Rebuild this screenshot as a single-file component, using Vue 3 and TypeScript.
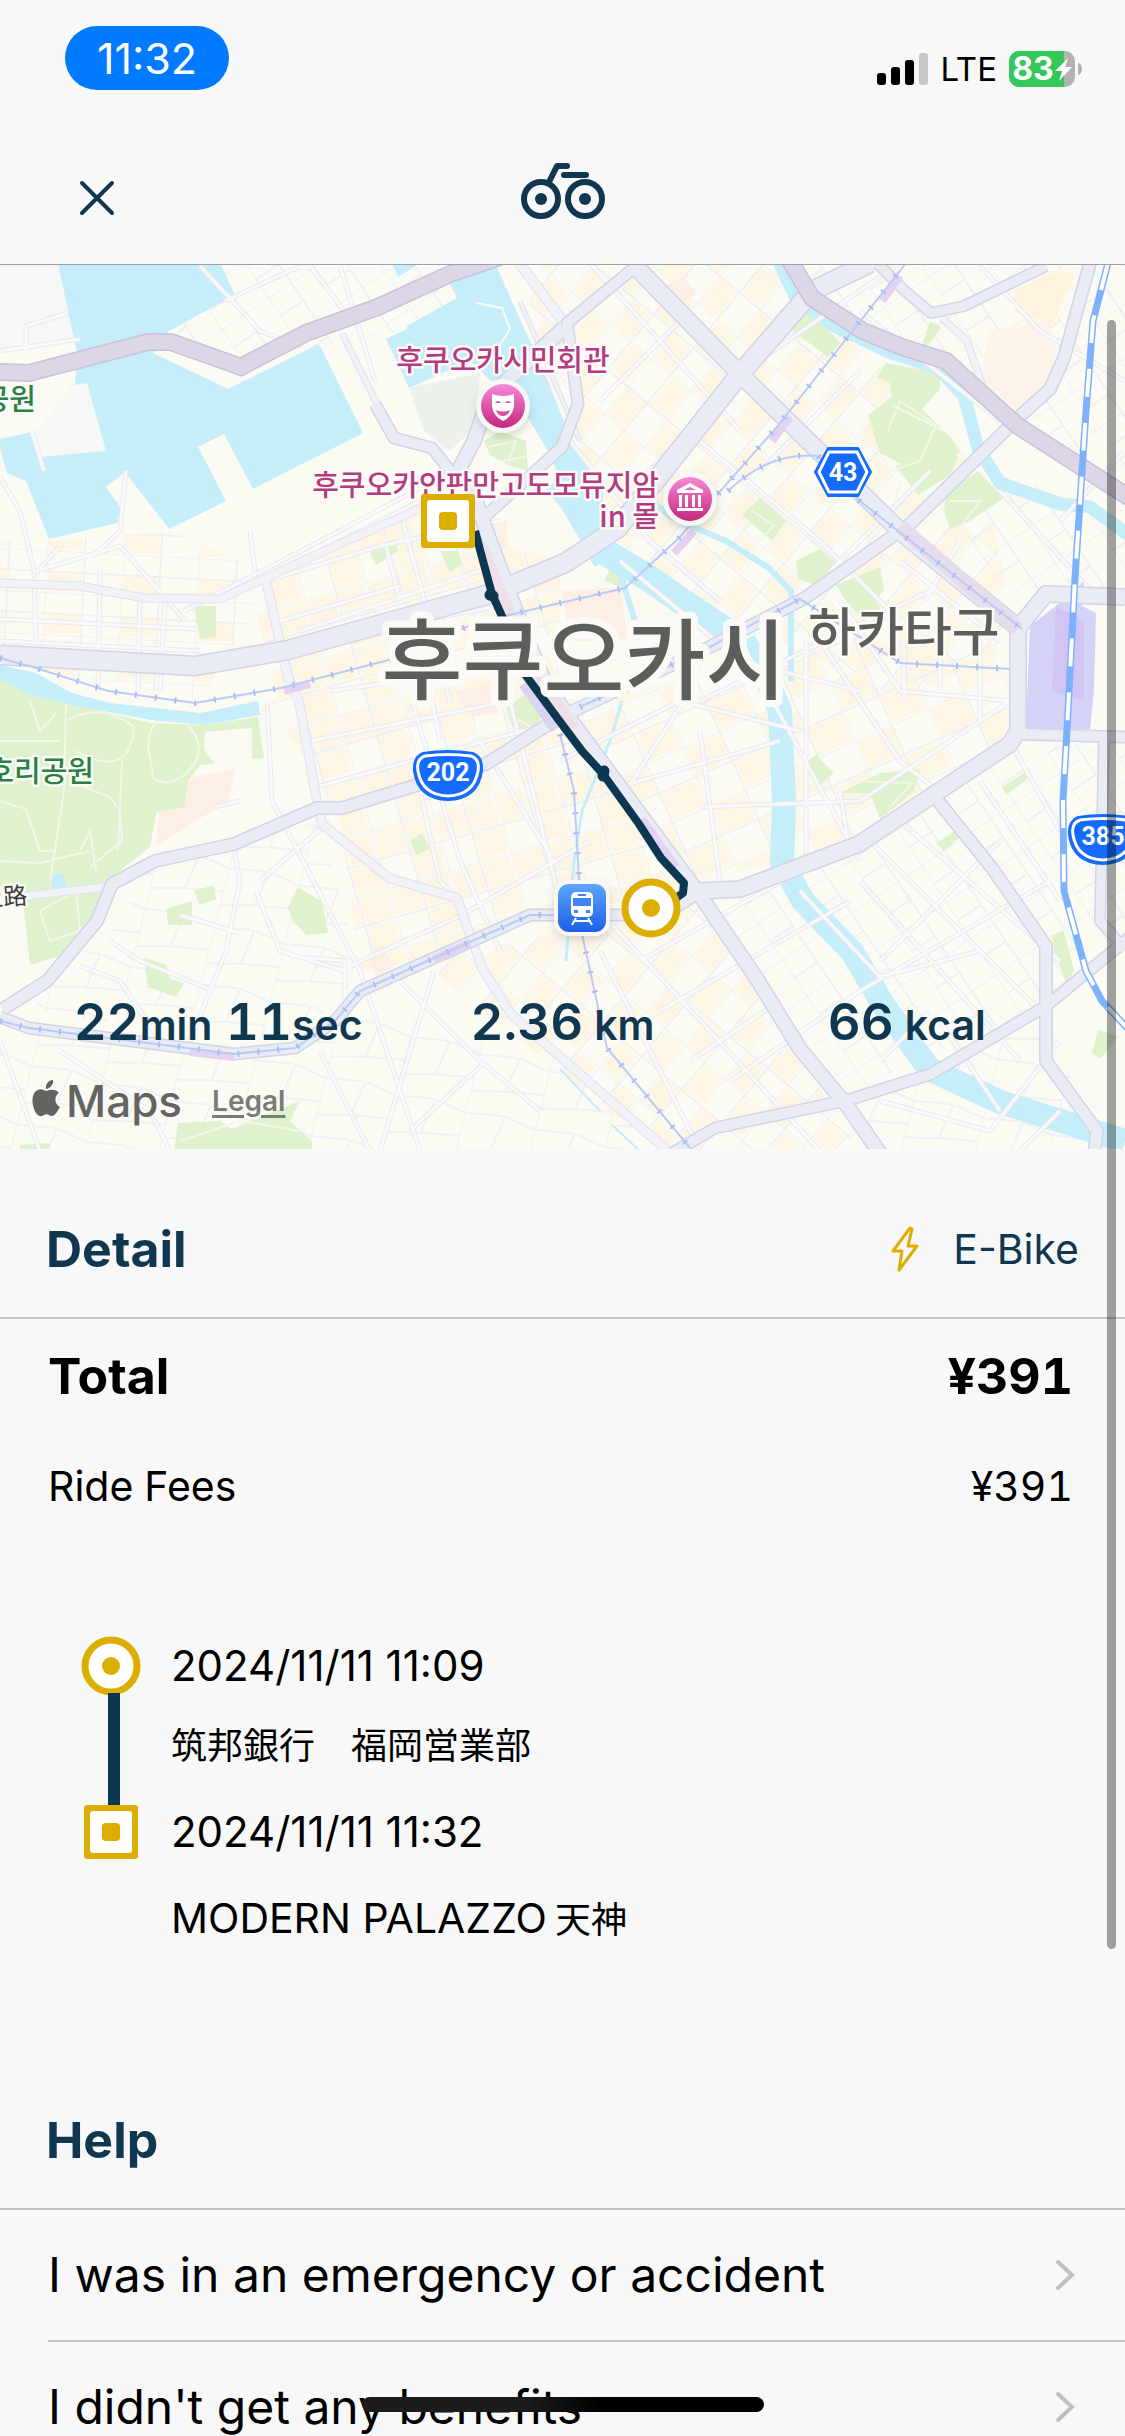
<script setup lang="ts">
interface Road {
  d: string
  w: number
}

interface District {
  points: string
  pattern: string
}

interface HelpItem {
  id: number
  label: string
}

const waters: string[] = [
  '58,262 220,262 235,294 164,333 153,352 228,388 319,343 363,432 253,488 224,433 198,446 226,500 169,528 125,471 106,486 121,507 117,522 49,538 26,480 7,472 0,447 0,438 32,431 39,456 106,450 87,382 75,384 77,352 74,338',
  '392,262 420,262 398,276',
  '450,283 495,262 522,323 541,363 566,426 584,462 604,484 600,535 570,500 548,450 530,420 512,400 470,360 409,387 386,338 407,328 407,325 457,297',
  '0,664 36,672 72,692 110,702 200,712 258,700 260,714 205,724 151,719 72,704 30,694 0,678',
  '52,874 64,872 66,886 52,888',
]

const streams: Road[] = [
  { d: 'M556,480 L572,500 L590,530 L606,560', w: 26 },
  { d: 'M600,548 L650,578 L690,606 L726,630', w: 27 },
  { d: 'M744,640 L764,672 L780,710 L784,800 L782,862 L803,900 L853,952 L884,1005 L929,1068 L1000,1101 L1125,1140', w: 24 },
  { d: 'M776,255 L796,297 L834,325 L886,350 L938,367 L964,395 L978,447 L1000,482 L1060,503 L1090,506 L1130,535', w: 13 },
  { d: 'M650,498 L672,517 L726,540 L769,567 L791,590 L791,680', w: 6 },
  { d: 'M616,560 L632,610 L640,640', w: 6 },
  { d: 'M622,700 L610,740 L582,810 L574,860 L566,960', w: 3 },
  { d: 'M560,1068 L600,1110 M612,1124 L640,1150', w: 2 },
]

const parks: string[] = [
  '0,678 60,700 151,722 205,724 258,716 264,757 200,764 188,780 184,806 156,812 150,846 112,876 98,922 70,952 30,964 22,890 0,886',
  '795,318 808,306 840,342 828,356 793,330',
  '886,362 940,372 940,388 922,408 952,438 960,450 930,478 880,452 868,414 892,396 890,382 876,376',
  '896,465 940,450 958,456 950,474 918,494',
  '920,350 930,320 941,326 932,340',
  '946,492 978,470 1004,497 970,520 950,528 944,510',
  '742,514 760,497 786,520 772,540',
  '796,560 820,548 842,568 824,586 798,578',
  '836,584 880,566 884,588 876,600 886,618 868,624 846,600',
  '370,552 394,538 398,550 376,564',
  '440,550 458,550 462,562 450,572',
  '194,605 216,605 216,636 200,638',
  '484,440 500,430 526,440 528,470 508,464 490,454',
  '506,706 524,694 544,710 530,736 512,726',
  '840,792 880,772 920,768 914,790 880,818 870,792',
  '808,760 816,754 834,772 820,784',
  '288,906 298,886 314,896 322,900 328,932 306,934 292,918',
  '166,908 192,900 192,924 168,924',
  '194,890 214,884 216,898 200,904',
  '144,956 166,964 170,978 184,982 176,996 148,986',
  '410,840 422,832 430,848 416,854',
  '1052,934 1064,930 1074,970 1066,982 1054,950',
  '1002,786 1030,768 1030,776 1006,794',
  '936,842 958,828 960,836 944,850',
  '1098,1028 1118,1036 1100,1058 1092,1052',
  '178,1122 220,1120 232,1128 270,1112 300,1100 290,1120 312,1140 312,1150 174,1150',
  '20,1144 50,1142 50,1150 20,1150',
  '610,568 624,576 620,586 604,580',
  '752,650 782,690 782,706 770,690',
]

const pinkAreas: string[] = [
  '484,528 506,520 508,545 492,556',
  '562,590 620,586 628,640 570,640',
  '456,690 490,684 500,712 468,716',
  '668,284 684,276 696,292 684,306',
  '368,954 382,944 394,966 376,976',
  '160,808 194,776 236,768 228,800 156,845',
]

const stationAreas: string[] = [
  '1030,625 1062,600 1084,580 1082,605 1096,612 1094,690 1090,728 1026,728',
]

const districts: District[] = [
  { points: '0,262 58,262 76,340 30,350 0,350', pattern: 'url(#plain)' },
  { points: '225,262 520,262 400,330 330,345 236,352 176,334', pattern: 'url(#pale-nw)' },
  { points: '0,540 49,540 170,530 240,560 260,600 200,700 0,660', pattern: 'url(#blocks-flat)' },
  { points: '250,590 420,510 490,540 560,560 560,700 440,740 290,740', pattern: 'url(#blocks-ne)' },
  { points: '520,262 780,262 980,470 1020,640 900,700 780,640 700,620 600,520 560,430', pattern: 'url(#blocks-diag)' },
  { points: '790,262 1125,262 1125,480 1000,420 860,320', pattern: 'url(#pale-nw)' },
  { points: '980,460 1125,520 1125,600 1020,600 930,520', pattern: 'url(#pale-nw)' },
  { points: '270,700 560,720 690,890 560,910 420,960 360,970 340,820', pattern: 'url(#blocks-ne)' },
  { points: '160,850 320,820 360,970 300,1040 100,1020 30,1010 110,930', pattern: 'url(#pale-flat)' },
  { points: '0,1030 300,1050 360,1000 560,1060 660,1150 0,1150', pattern: 'url(#pale-flat)' },
  { points: '560,700 780,640 1020,640 1010,730 860,840 700,880', pattern: 'url(#blocks-low)' },
  { points: '420,960 700,900 860,1150 660,1150', pattern: 'url(#blocks-diag)' },
  { points: '700,890 860,850 1010,750 1125,740 1125,930 1050,1000 850,1090', pattern: 'url(#pale-nw)' },
  { points: '860,1100 1050,1010 1090,1130 1125,1150 880,1150', pattern: 'url(#pale-flat)' },
]

const minorRoads: string[] = [
  'M0,350 L80,338 M26,350 L26,325 L68,312 M32,431 L44,470 M0,476 L20,510 L34,570 L36,640',
  'M200,265 L260,330 L300,345 M310,265 L352,320 M340,265 L375,380 M225,300 L300,265 M36,570 L120,545 L185,620 M126,470 L120,530 L92,556',
  'M184,610 L330,535 L420,487 M255,570 L250,530 M300,560 L420,500',
  'M100,566 L98,690 M60,545 L36,572 M140,590 L138,690 M165,598 L160,690 M0,618 L195,628 M0,640 L200,650',
  'M400,510 L430,620 L450,700 M430,618 L500,605 M386,545 L400,600 M440,740 L420,640',
  'M266,580 L380,545 L500,520 M300,630 L480,570 M280,620 L400,585',
  'M267,700 L272,800 L360,970 L420,1150 M330,690 L400,680 M310,740 L510,700 M320,785 L560,720 M412,700 L460,860 L500,950',
  'M510,700 L560,900 M420,790 L440,880 L460,900 M560,870 L480,740 M350,965 L460,915 L590,840 M260,880 L330,820 M214,806 L240,800 M232,840 L240,880 L226,950 L190,1040',
  'M180,914 L240,932 M110,940 L140,960 L214,990 M80,965 L120,980 L160,1040 M256,890 L280,950 L345,970 M290,955 L345,960 L345,1010',
  'M0,1040 L40,1150 M60,1050 L150,1110 L170,1150 M320,1050 L370,1150 M400,980 L480,1060 L540,1110 M434,970 L380,1150 M486,1060 L410,1130',
  'M590,262 L740,430 M560,330 L640,262 M600,400 L680,320 M640,480 L740,373 M570,440 L650,540 L720,600 M740,373 L900,262 M700,440 L820,540 L900,620',
  'M830,570 L930,470 M760,470 L860,370 M900,560 L1000,640 M925,600 L960,540 M860,310 L1000,420 M980,265 L1040,330 L1125,380 M1000,490 L1100,600 M1060,520 L1125,450',
  'M620,560 L740,660 L860,690 M700,700 L930,590 M740,640 L860,860 M820,640 L900,760 L950,800 M560,760 L680,700 L800,730 M604,790 L780,740 M700,806 L860,800 L1010,700',
  'M806,640 L806,870 M840,600 L900,690 L1010,700 M904,640 L904,700 M940,640 L940,690 M980,640 L980,720 M840,790 L848,840 L760,890',
  'M690,690 L620,800 M700,730 L720,880 M590,900 L820,1150 M640,960 L800,870 M660,1010 L850,900 M690,1060 L780,1000 M600,950 L700,1150 M730,1080 L860,990 L1050,880',
  'M870,840 L1040,1010 M900,820 L1060,960 M980,780 L1060,900 M860,880 L1020,1060 M800,890 L880,976 L980,950 M880,960 L1000,840 M1010,740 L1060,830 M1100,740 L1102,900',
  'M880,1100 L990,1130 L1060,1040 M940,1020 L1000,1110 M1060,1110 L1020,1150 M880,1060 L930,1010',
]

const parkPaths: string[] = [
  'M66,700 L64,790 L50,880 M66,720 Q100,700 134,726 Q130,780 76,750 M148,746 Q150,710 180,715 Q206,740 196,760 Q176,790 154,778 Z M0,740 L60,740 M0,800 L26,808 L40,850 L56,850',
  'M70,780 L110,796 L120,810 L122,840 L90,866 M122,760 L118,850 M30,700 L40,730 L56,712 M80,850 L90,830 L96,870 M0,860 L40,862 L90,850 M40,910 L76,890 L80,930 L50,940 Z',
  'M888,430 L900,400 L936,424 L920,460 L890,470 M892,404 L944,430 M950,500 L980,500 L960,526 M752,510 L774,524 L760,540 M504,712 L532,726 M488,446 L516,440 L508,462',
  'M850,780 L912,782 L890,806 M180,1140 L240,1120 L300,1130 M500,460 L526,456 M880,560 L900,480',
]

const localRoads: Road[] = [
  { d: 'M0,582 L80,585 L144,597 L220,598 L324,550 L421,507', w: 7 },
  { d: 'M266,580 L288,677 L299,700 L317,800 L322,823 L389,877 L457,897 L482,967 L511,1013 L565,1060 L668,1150', w: 8 },
  { d: 'M26,895 L104,886', w: 7 },
  { d: 'M342,332 L378,405', w: 5 },
  { d: 'M942,317 L967,340 L982,384', w: 6 },
  { d: 'M563,320 L519,262', w: 9 },
  { d: 'M520,300 L580,440', w: 3 },
]

const majorRoads: Road[] = [
  { d: 'M375,403 L394,437 L432,447 L455,476', w: 10 },
  { d: 'M640,262 L567,322 L578,403 L562,446 L480,520', w: 10 },
  { d: 'M564,327 L490,395 L474,440 L455,476', w: 13 },
  { d: 'M877,262 L905,290 L931,312 L964,305 L1046,265', w: 9 },
  { d: 'M1090,262 L1064,357 L1050,388 L1018,417 L910,523 L805,597 L708,647 L560,716 L486,763 L342,807 L317,807 L234,843 L155,860 L112,883 L97,920 L47,980 L3,1008', w: 11 },
  { d: 'M0,1016 L29,1027 L140,1041 L234,1053 L295,1047 L335,1020 L360,990 L450,950 L530,914 L650,914', w: 10 },
  { d: 'M468,478 L490,540 L516,610 L545,682 L575,725 L697,890 L755,975 L800,1048 L848,1106 L882,1155', w: 13 },
  { d: 'M650,920 L697,890 L740,888 L859,843 L1010,743 L1018,730 L1018,627 L1046,593 L1125,596', w: 15 },
  { d: 'M1016,733 L1125,736', w: 10 },
  { d: 'M938,800 L992,867 L1046,945 L1046,1060 L1097,1130 L1094,1155', w: 11 },
  { d: 'M1104,740 L1100,920 L1125,948', w: 9 },
  { d: 'M1130,936 L1046,1005 L931,1073 L848,1099 L715,1127 L672,1152', w: 10 },
]

const trunkRoads: Road[] = [
  { d: 'M0,654 L195,665 L288,649 L490,593 L565,562 L618,527 L740,373 L812,290 L870,262', w: 18 },
  { d: 'M632,262 L740,373 L902,532 L1022,630', w: 16 },
]

const motorways: Road[] = [
  { d: 'M0,371 L29,372 L148,341 L171,341 L241,366 L252,360 L306,332 L378,306 L450,273 L500,256', w: 15 },
  { d: 'M787,255 L812,297 L863,330 L902,346 L946,360 L1018,425 L1130,497', w: 15 },
]

const metroLines: string[] = [
  'M0,657 L36,667 L108,690 L195,702 L281,687 L396,657 L475,622 L560,602 L625,587 L679,537 L776,427 L906,262',
  'M728,490 Q770,450 818,455 L860,500 L1022,628',
  'M580,706 L708,647 L800,598 L900,662 L1010,668',
  'M560,733 L574,790 L582,933 L607,1047 L690,1147',
  'M0,1020 L29,1027 L140,1041 L234,1053 L295,1047 L335,1020 L360,990 L450,950 L530,914 L610,914',
]

const jrLine = 'M1108,262 L1093,320 L1086,410 L1075,577 L1068,710 L1063,800 L1064,890 L1086,970 L1102,1000 L1130,1030'

const helpItems: HelpItem[] = [
  { id: 1, label: 'I was in an emergency or accident' },
  { id: 2, label: "I didn't get any benefits" },
]
</script>

<template>
  <div class="app">
    <div class="status">
      <span class="time">11:32</span>
      <div class="status-right">
        <svg class="signal" viewBox="0 0 51 32" aria-hidden="true">
          <rect x="0" y="20" width="9" height="12" rx="3" />
          <rect x="14" y="14" width="9" height="18" rx="3" />
          <rect x="28" y="7" width="9" height="25" rx="3" />
          <rect x="42" y="0" width="9" height="32" rx="3" fill="#c7c7c7" />
        </svg>
        <span class="lte">LTE</span>
        <svg class="battery" viewBox="0 0 74 36" aria-hidden="true">
          <defs>
            <clipPath id="cell"><rect width="66" height="36" rx="10" /></clipPath>
          </defs>
          <g clip-path="url(#cell)">
            <rect width="66" height="36" fill="#b2b2b2" />
            <rect width="55" height="36" fill="#34c759" />
          </g>
          <path d="M69 12 Q73 13 73 18 Q73 23 69 24 Z" fill="#b2b2b2" />
          <text x="24" y="29" text-anchor="middle" class="battery-text">83</text>
          <path d="M59 7 L46 20 H53 L50 30 L63 16 H56 Z" fill="#fff" />
        </svg>
      </div>
    </div>

    <header class="bar">
      <button class="close" type="button" aria-label="Close">
        <svg viewBox="0 0 36 36"><path d="M3 3 L33 33 M33 3 L3 33" /></svg>
      </button>
      <svg class="bike" viewBox="0 0 84 56" aria-hidden="true">
        <circle cx="20" cy="36" r="17" />
        <circle cx="64" cy="36" r="17" />
        <path d="M28 19 L36 3 H46 M43 12 H65" />
        <circle class="hub" cx="20" cy="36" r="6" />
        <circle class="hub" cx="64" cy="36" r="6" />
      </svg>
    </header>

    <main class="content">
      <section class="map">
        <svg class="map-canvas" viewBox="0 264 1125 884" role="img" aria-label="Ride route">
          <defs>
            <pattern id="plain" width="8" height="8" patternUnits="userSpaceOnUse">
              <rect width="8" height="8" fill="#f7f7f5" />
            </pattern>
            <pattern id="pale-nw" width="56" height="44" patternUnits="userSpaceOnUse" patternTransform="rotate(-34)">
              <path d="M0 0 H56 M0 22 H28 M0 0 V44 M28 0 V44" class="street" />
            </pattern>
            <pattern id="pale-flat" width="72" height="60" patternUnits="userSpaceOnUse" patternTransform="rotate(14)">
              <path d="M0 6 L40 0 L72 6 M0 0 V60 M40 0 L34 36 L72 30 M34 36 L0 44" class="street" />
            </pattern>
            <pattern id="blocks-flat" width="76" height="42" patternUnits="userSpaceOnUse" patternTransform="rotate(3)">
              <rect x="2" y="22" width="34" height="18" class="block" />
              <path d="M0 0 H76 M0 21 H76 M0 0 V42 M38 0 V42" class="street" />
            </pattern>
            <pattern id="blocks-ne" width="64" height="60" patternUnits="userSpaceOnUse" patternTransform="rotate(-16)">
              <rect x="2" y="2" width="28" height="26" class="block" />
              <rect x="34" y="2" width="28" height="26" class="block" />
              <rect x="34" y="32" width="28" height="26" class="block" />
              <path d="M0 0 H64 M0 30 H64 M0 0 V60 M32 0 V60" class="street" />
            </pattern>
            <pattern id="blocks-diag" width="72" height="52" patternUnits="userSpaceOnUse" patternTransform="rotate(-50)">
              <rect x="2" y="2" width="32" height="22" class="block" />
              <rect x="38" y="28" width="32" height="22" class="block" />
              <path d="M0 0 H72 M0 26 H72 M0 0 V52 M36 0 V52" class="street" />
            </pattern>
            <pattern id="blocks-low" width="80" height="64" patternUnits="userSpaceOnUse" patternTransform="rotate(-24)">
              <rect x="2" y="2" width="36" height="28" class="block" />
              <rect x="42" y="34" width="36" height="28" class="block" />
              <path d="M0 0 H80 M0 32 H80 M0 0 V64 M40 0 V64" class="street" />
            </pattern>
            <linearGradient id="pink" x1="0" y1="0" x2="0" y2="1">
              <stop offset="0" stop-color="#f58ad9" />
              <stop offset="1" stop-color="#c4267d" />
            </linearGradient>
            <linearGradient id="blue" x1="0" y1="0" x2="0" y2="1">
              <stop offset="0" stop-color="#5ba6fb" />
              <stop offset="1" stop-color="#1c5fe8" />
            </linearGradient>
            <filter id="shade" x="-30%" y="-30%" width="160%" height="170%">
              <feDropShadow dx="0" dy="4" stdDeviation="4" flood-color="#555" flood-opacity=".22" />
            </filter>
          </defs>

          <rect y="264" width="1125" height="884" fill="#fcfbf3" />
          <polygon v-for="(a, i) in districts" :key="`d${i}`" :points="a.points" :fill="a.pattern" />
          <polygon points="1015,290 1060,268 1075,275 1052,322 1015,312" fill="#fef3dd" />
          <polygon points="990,330 1050,320 1060,370 1018,410 980,378" fill="#fcf3ea" />
          <polygon points="409,387 480,372 476,425 450,450 424,430" fill="#ecf1ea" />
          <polygon v-for="(p, i) in pinkAreas" :key="`k${i}`" :points="p" fill="#fdeee6" />
          <polygon v-for="(p, i) in parks" :key="`p${i}`" :points="p" fill="#dff1cd" />
          <polygon points="205,731 252,727 252,760 216,765 204,748" fill="#fcfbf3" />
          <polygon points="72,382 88,382 106,450 40,456 32,430 45,420" fill="#f7f7f5" />
          <path v-for="(d, i) in parkPaths" :key="`pp${i}`" :d="d" class="park-path" />
          <polygon v-for="(w, i) in waters" :key="`w${i}`" :points="w" fill="#c5edfa" />
          <path v-for="(s, i) in streams" :key="`s${i}`" :d="s.d" :stroke-width="s.w" class="stream" />
          <path d="M476,302 L502,307 L510,328 L496,350" stroke="#fcfbf3" stroke-width="2" fill="none" />

          <path v-for="(d, i) in minorRoads" :key="`me${i}`" :d="d" class="minor-edge" />
          <path v-for="(d, i) in minorRoads" :key="`m${i}`" :d="d" class="minor" />

          <polygon v-for="(p, i) in stationAreas" :key="`st${i}`" :points="p" fill="#d5d2f8" />
          <polygon points="1056,606 1084,620 1084,700 1052,690" fill="#d2c4f3" />

          <path v-for="(r, i) in localRoads" :key="`le${i}`" :d="r.d" :stroke-width="r.w + 2" class="edge soft" />
          <path v-for="(r, i) in localRoads" :key="`l${i}`" :d="r.d" :stroke-width="r.w" class="fill light" />
          <path v-for="(r, i) in majorRoads" :key="`je${i}`" :d="r.d" :stroke-width="r.w + 3" class="edge" />
          <path v-for="(r, i) in trunkRoads" :key="`te${i}`" :d="r.d" :stroke-width="r.w + 3" class="edge" />
          <path v-for="(r, i) in majorRoads" :key="`j${i}`" :d="r.d" :stroke-width="r.w" class="fill" />
          <path v-for="(r, i) in trunkRoads" :key="`t${i}`" :d="r.d" :stroke-width="r.w" class="fill" />
          <path v-for="(r, i) in motorways" :key="`we${i}`" :d="r.d" :stroke-width="r.w + 3" stroke="#c8c2da" fill="none" />
          <path v-for="(r, i) in motorways" :key="`w2${i}`" :d="r.d" :stroke-width="r.w" stroke="#dcd6e6" fill="none" />

          <path d="M482,545 L514,625 L545,685 L575,728" stroke="#efdfe9" stroke-width="12" fill="none" />
          <path d="M524,682 L556,728" stroke="#dcd4f4" stroke-width="12" fill="none" />
          <path d="M900,525 L1018,628" stroke="#e7dcec" stroke-width="15" fill="none" />
          <path d="M772,440 L790,416 M674,552 L694,530 M882,300 L900,275 M284,690 L310,683 M190,1051 L234,1056 M434,958 L470,942 M642,818 L676,866" stroke="#e4d3f0" stroke-width="8" fill="none" />

          <path v-for="(d, i) in metroLines" :key="`b${i}`" :d="d" class="metro" />
          <path v-for="(d, i) in metroLines" :key="`bt${i}`" :d="d" class="metro-tick" />
          <path :d="jrLine" class="jr" />
          <path :d="jrLine" class="jr-dash" />

          <path d="M475,530 L483,560 L492,593 L505,622 L524,672 L558,718 L582,750 L603,773 L639,823 L661,857 L684,882 L683,892 L672,900" class="route" />
          <path d="M490,594 L493,595 M604,770 L603,775" class="route node" />

          <text x="36" y="409" text-anchor="end" class="label park">공원</text>
          <text x="94" y="781" text-anchor="end" class="label park">호리공원</text>
          <text x="27" y="904" text-anchor="end" class="label road" transform="rotate(-4 12 895)">上路</text>
          <text x="503" y="370" text-anchor="middle" class="label poi">후쿠오카시민회관</text>
          <text x="659" y="495" text-anchor="end" class="label poi">후쿠오카안판만고도모뮤지암</text>
          <text x="659" y="526" text-anchor="end" class="label poi">in 몰</text>
          <text x="584" y="691" text-anchor="middle" class="label city">후쿠오카시</text>
          <text x="904" y="650" text-anchor="middle" class="label ward">하카타구</text>

          <g transform="translate(503 405)">
            <circle r="27" fill="#f9f7f4" filter="url(#shade)" />
            <circle r="22" fill="url(#pink)" />
            <path d="M-11 -12 Q0 -8 11 -12 V0 Q10 10 0 15 Q-10 10 -11 0 Z" fill="#fff" />
            <path d="M-8 -3 Q-5 -7 -2 -3 Z M2 -3 Q5 -7 8 -3 Z M-7 4 Q0 7 7 4 Q5 10 0 10 Q-5 10 -7 4 Z" fill="#dc4fa5" />
          </g>
          <g transform="translate(690 498)">
            <circle r="27" fill="#f9f7f4" filter="url(#shade)" />
            <circle r="22" fill="url(#pink)" />
            <path d="M0 -16 L13 -9 V-6 H-13 V-9 Z M-11 -4 H-8 V8 H-11 Z M-5 -4 H-2 V8 H-5 Z M2 -4 H5 V8 H2 Z M8 -4 H11 V8 H8 Z M-13 9 H13 V12 H-13 Z" fill="#fff" />
            <path d="M-6 -9 L0 -12 L6 -9 Z" fill="#ea6cbf" />
          </g>
          <g transform="translate(582 907)">
            <rect x="-28" y="-28" width="56" height="56" rx="15" fill="#f9f8f6" filter="url(#shade)" />
            <rect x="-24" y="-24" width="48" height="48" rx="11" fill="url(#blue)" />
            <rect x="-11" y="-16" width="22" height="25" rx="5" fill="#fff" />
            <path d="M-4 -14 H4 V-12 H-4 Z M-9 -10 H9 V-2 H-9 Z M-8 2 H-4 V5 H-8 Z M4 2 H8 V5 H4 Z" fill="#3e85f3" />
            <path d="M-6 10 L-10 17 M6 10 L10 17 M-7 13 H7" stroke="#fff" stroke-width="2" fill="none" />
          </g>

          <g transform="translate(843 471)">
            <path d="M-15 -24 H15 L28 0 L15 24 H-15 L-28 0 Z" class="shield" />
            <path d="M-14 -20 H14 L24 0 L14 20 H-14 L-24 0 Z" class="shield-ring" />
            <text y="9" text-anchor="middle" class="shield-text">43</text>
          </g>
          <g transform="translate(448 774)">
            <path d="M-25 -22 Q0 -26 25 -22 Q35 -18 34 -4 Q30 24 0 25 Q-30 24 -34 -4 Q-35 -18 -25 -22 Z" class="shield" />
            <path d="M-23 -19 Q0 -22 23 -19 Q32 -16 30 -4 Q26 20 0 21 Q-26 20 -30 -4 Q-32 -16 -23 -19 Z" class="shield-ring" />
            <text y="6" text-anchor="middle" class="shield-text">202</text>
          </g>
          <g transform="translate(1103 838)">
            <path d="M-25 -22 Q0 -26 25 -22 Q35 -18 34 -4 Q30 24 0 25 Q-30 24 -34 -4 Q-35 -18 -25 -22 Z" class="shield" />
            <path d="M-23 -19 Q0 -22 23 -19 Q32 -16 30 -4 Q26 20 0 21 Q-26 20 -30 -4 Q-32 -16 -23 -19 Z" class="shield-ring" />
            <text y="6" text-anchor="middle" class="shield-text">385</text>
          </g>

          <g transform="translate(448 520)">
            <rect x="-27" y="-27" width="54" height="54" rx="3" fill="#dbae00" />
            <rect x="-21" y="-21" width="42" height="42" rx="3" fill="#fff" />
            <rect x="-9" y="-9" width="18" height="18" rx="4" fill="#dbae00" />
          </g>
          <g transform="translate(651 907)">
            <circle r="26" fill="#fff" stroke="#dbae00" stroke-width="7" />
            <circle r="9" fill="#dbae00" />
          </g>
        </svg>

        <div class="overlay">
          <div class="stats">
            <p class="stat">22<small>min</small> 11<small>sec</small></p>
            <p class="stat">2.36<small> km</small></p>
            <p class="stat">66<small> kcal</small></p>
          </div>
          <div class="credits">
            <svg class="apple" viewBox="0 0 28 37" aria-hidden="true">
              <path d="M14 11 C10 9 7 8 3 12 C-1 17 0 27 4 33 C7 37 9 37 12 35 C14 34 15 34 17 35 C20 37 22 36 25 32 C26 30 27 29 28 27 C22 24 22 16 27 13 C24 9 19 9 14 11 Z M14 9 C13 4 17 0 21 0 C22 4 18 9 14 9 Z" />
            </svg>
            <span class="maps">Maps</span>
            <a class="legal" href="#legal">Legal</a>
          </div>
        </div>
      </section>

      <section class="head">
        <h2>Detail</h2>
        <p class="kind">
          <svg class="bolt" viewBox="0 0 28 46" aria-hidden="true">
            <path d="M19 2 L2 25 H11 L8 44 L26 20 H17 L21 3 Z" />
          </svg>
          <span>E-Bike</span>
        </p>
      </section>

      <dl class="fees">
        <div class="fee total">
          <dt>Total</dt>
          <dd>¥391</dd>
        </div>
        <div class="fee">
          <dt>Ride Fees</dt>
          <dd>¥391</dd>
        </div>
      </dl>

      <section class="trip">
        <div class="rail" aria-hidden="true">
          <svg class="pin" viewBox="0 0 60 60">
            <circle cx="30" cy="30" r="26" fill="#fff" stroke="#dbae00" stroke-width="7" />
            <circle cx="30" cy="30" r="9" fill="#dbae00" />
          </svg>
          <span class="link"></span>
          <svg class="pin" viewBox="0 0 60 60">
            <rect x="3" y="3" width="54" height="54" rx="3" fill="#dbae00" />
            <rect x="9" y="9" width="42" height="42" rx="3" fill="#fff" />
            <rect x="21" y="21" width="18" height="18" rx="4" fill="#dbae00" />
          </svg>
        </div>
        <div class="stops">
          <div class="stop">
            <p class="when">2024/11/11 11:09</p>
            <p class="place">筑邦銀行　福岡営業部</p>
          </div>
          <div class="stop">
            <p class="when">2024/11/11 11:32</p>
            <p>MODERN PALAZZO<span class="cjk">天神</span></p>
          </div>
        </div>
      </section>

      <section class="help">
        <div class="head">
          <h2>Help</h2>
        </div>
        <ul>
          <li v-for="item in helpItems" :key="item.id">
            <button type="button" class="help-row">
              <span>{{ item.label }}</span>
              <svg class="chevron" viewBox="0 0 20 32" aria-hidden="true"><path d="M3 3 L17 16 L3 29" /></svg>
            </button>
          </li>
        </ul>
      </section>
    </main>

    <div class="scrollbar"></div>
    <div class="home"></div>
  </div>
</template>

<style>
body {
  margin: 0;
  background: #f8f8f8;
}
</style>

<style scoped>
.app {
  position: relative;
  display: flex;
  flex-direction: column;
  height: 100vh;
  overflow: hidden;
  background: #f8f8f8;
  color: #000;
  font-family: Inter, "Noto Sans CJK JP", sans-serif;
}
h2,
p,
dl,
dd,
ul {
  margin: 0;
  padding: 0;
}
button {
  border: 0;
  background: none;
  color: inherit;
  font: inherit;
  padding: 0;
}

.status {
  flex: none;
  display: flex;
  justify-content: space-between;
  align-items: flex-start;
  height: 132px;
  padding: 26px 42px 0 65px;
  box-sizing: border-box;
}
.time {
  width: 164px;
  border-radius: 32px;
  background: #007aff;
  color: #fff;
  font-size: 43px;
  line-height: 64px;
  text-align: center;
}
.status-right {
  display: flex;
  align-items: center;
  padding-top: 24px;
}
.signal {
  width: 51px;
  height: 32px;
}
.lte {
  margin: 0 12px;
  font-size: 33px;
  line-height: 38px;
}
.battery {
  width: 74px;
  height: 36px;
}
.battery-text {
  fill: #fff;
  font-size: 32px;
  font-weight: 700;
}

.bar {
  flex: none;
  display: grid;
  grid-template-columns: 1fr auto 1fr;
  align-items: center;
  height: 133px;
  padding: 0 79px;
  border-bottom: 1px solid #a0a0a0;
  box-sizing: border-box;
}
.close {
  width: 36px;
  height: 36px;
}
.close svg {
  width: 36px;
  height: 36px;
  display: block;
}
.close path,
.bike {
  fill: none;
  stroke: #0f3850;
  stroke-width: 4;
  stroke-linecap: round;
  stroke-linejoin: round;
}
.bike {
  width: 84px;
  height: 56px;
  padding-bottom: 14px;
  stroke-width: 6;
}
.bike .hub {
  fill: #0f3850;
  stroke: none;
}

.content {
  flex: 1;
  min-height: 0;
  overflow: hidden;
}
.map {
  position: relative;
}
.map-canvas {
  display: block;
  width: 100%;
  height: auto;
}
.street {
  fill: none;
  stroke: #f0f0f3;
  stroke-width: 2;
}
.block {
  fill: #fef6e5;
}
.park-path {
  fill: none;
  stroke: #f4f6ea;
  stroke-width: 2;
}
.stream {
  fill: none;
  stroke: #c5edfa;
  stroke-linejoin: round;
}
.minor-edge {
  fill: none;
  stroke: #e9e9f1;
  stroke-width: 5;
}
.minor {
  fill: none;
  stroke: #f9f9fb;
  stroke-width: 3;
}
.edge {
  fill: none;
  stroke: #d2d4e5;
  stroke-linejoin: round;
}
.edge.soft {
  stroke: #e0e2ee;
}
.fill {
  fill: none;
  stroke: #e9ecf5;
  stroke-linejoin: round;
}
.fill.light {
  stroke: #f1f3f9;
}
.metro {
  fill: none;
  stroke: #bccbf6;
  stroke-width: 2;
}
.metro-tick {
  fill: none;
  stroke: #a9bef6;
  stroke-width: 6;
  stroke-dasharray: 2 18;
}
.jr {
  fill: none;
  stroke: #7db1fc;
  stroke-width: 7;
}
.jr-dash {
  fill: none;
  stroke: #fff;
  stroke-width: 4;
  stroke-dasharray: 28 26;
}
.route {
  fill: none;
  stroke: #0b3750;
  stroke-width: 8;
  stroke-linejoin: round;
}
.route.node {
  stroke-width: 11;
  stroke-linecap: round;
}
.label {
  paint-order: stroke;
  stroke: #fbfaf6;
  stroke-width: 5px;
  stroke-linejoin: round;
  font-family: "Noto Sans CJK KR", sans-serif;
  font-weight: 500;
  font-size: 29px;
}
.park {
  fill: #2b8046;
}
.poi {
  fill: #b33b82;
}
.road {
  fill: #3c3c3c;
  font-size: 24px;
  font-weight: 400;
}
.city {
  fill: #5c5e5c;
  stroke-width: 14px;
  font-size: 88px;
}
.ward {
  fill: #5c5e5c;
  font-size: 52px;
}
.shield {
  fill: #146bfc;
  stroke: #146bfc;
  stroke-width: 2;
  stroke-linejoin: round;
}
.shield-ring {
  fill: none;
  stroke: #fff;
  stroke-width: 3;
  stroke-linejoin: round;
}
.shield-text {
  fill: #fff;
  font-size: 25px;
  font-weight: 700;
  font-family: Roboto, sans-serif;
}

.overlay {
  position: absolute;
  left: 0;
  right: 0;
  bottom: 0;
  padding: 0 32px 20px;
}
.stats {
  display: grid;
  grid-template-columns: repeat(3, 1fr);
  padding: 0 14px;
}
.stat {
  color: #0f3850;
  font-size: 51px;
  line-height: 64px;
  font-weight: 600;
  font-variant-numeric: tabular-nums;
  text-align: center;
  white-space: pre;
}
.stat small {
  font-size: 41px;
}
.credits {
  display: flex;
  align-items: center;
  padding-top: 16px;
  color: #636363;
}
.apple {
  width: 28px;
  height: 37px;
  margin: 0 6px 6px 0;
  fill: #636363;
}
.maps {
  font-size: 44px;
  line-height: 56px;
  font-weight: 500;
}
.legal {
  margin-left: 30px;
  color: #7b7b78;
  font-size: 28px;
  line-height: 56px;
  font-weight: 600;
  text-underline-offset: 4px;
  text-decoration-thickness: 3px;
}

.head {
  display: flex;
  justify-content: space-between;
  align-items: center;
  height: 170px;
  padding: 32px 46px 0;
  border-bottom: 2px solid #c4c4c4;
  box-sizing: border-box;
}
h2 {
  color: #0f3850;
  font-size: 50px;
  line-height: 64px;
  font-weight: 700;
}
.kind {
  display: flex;
  align-items: center;
  gap: 34px;
  color: #0f3850;
  font-size: 41px;
  line-height: 48px;
}
.bolt {
  width: 28px;
  height: 46px;
  fill: none;
  stroke: #dbae00;
  stroke-width: 3;
  stroke-linejoin: round;
}
.fees {
  padding: 25px 52px 0 48px;
}
.fee {
  display: flex;
  justify-content: space-between;
  font-size: 41px;
  line-height: 64px;
  padding-top: 46px;
  font-variant-numeric: tabular-nums;
}
.fee.total {
  padding-top: 0;
  font-size: 50px;
  font-weight: 700;
}
.trip {
  display: flex;
  gap: 30px;
  padding: 118px 52px 0 81px;
}
.rail {
  display: flex;
  flex-direction: column;
  align-items: center;
}
.pin {
  display: block;
  width: 60px;
  height: 60px;
  overflow: visible;
}
.link {
  position: relative;
  left: 3px;
  width: 12px;
  height: 112px;
  margin: -3px 0;
  background: #0b3750;
}
.stops {
  display: flex;
  flex-direction: column;
  gap: 32px;
  font-size: 41px;
  line-height: 60px;
}
.stop {
  display: flex;
  flex-direction: column;
  gap: 26px;
}
.when {
  font-size: 42px;
}
.place,
.cjk {
  font-size: 36px;
}
.place {
  line-height: 48px;
}
.cjk {
  margin-left: 8px;
}
.help {
  padding-top: 90px;
}
ul {
  list-style: none;
  padding-left: 48px;
}
li + li {
  border-top: 2px solid #c4c4c4;
}
.help-row {
  display: flex;
  justify-content: space-between;
  align-items: center;
  width: 100%;
  height: 130px;
  padding-right: 50px;
  font-size: 48px;
  line-height: 64px;
  text-align: left;
}
.chevron {
  width: 20px;
  height: 32px;
  fill: none;
  stroke: #c0c0c0;
  stroke-width: 4;
  stroke-linecap: round;
}

.scrollbar {
  position: absolute;
  top: 320px;
  right: 9px;
  width: 9px;
  height: 1629px;
  border-radius: 5px;
  background: rgba(0, 0, 0, 0.36);
}
.home {
  position: absolute;
  left: 50%;
  bottom: 24px;
  width: 402px;
  height: 15px;
  margin-left: -201px;
  border-radius: 8px;
  background: linear-gradient(90deg, #1c1c1c 40%, #000 60%);
}
</style>
